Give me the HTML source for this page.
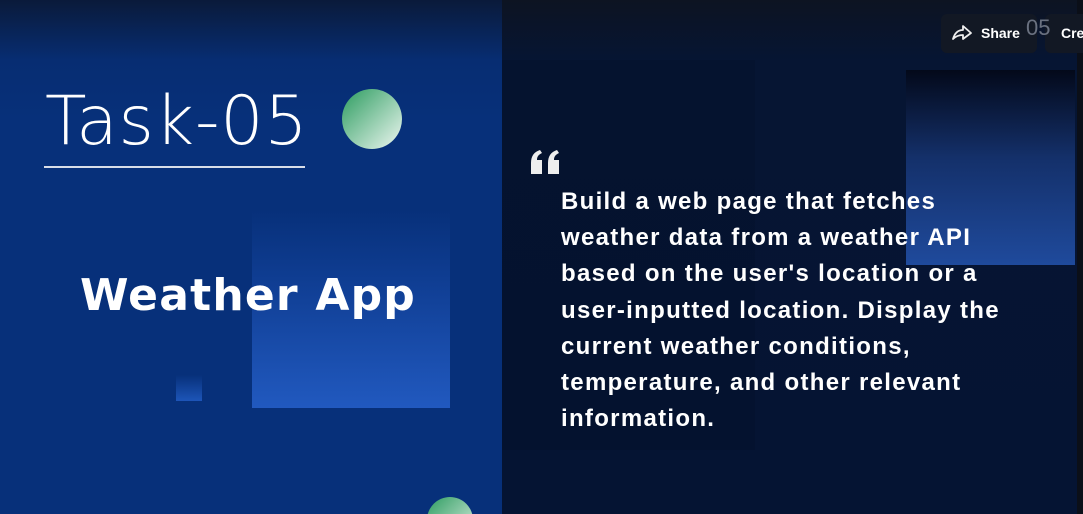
<!DOCTYPE html>
<html><head><style>
*{margin:0;padding:0;box-sizing:border-box}
html,body{width:1083px;height:514px;overflow:hidden}
body{background:#061230;font-family:"Liberation Sans",sans-serif}
#w{position:relative;width:1083px;height:514px;overflow:hidden}
.left{position:absolute;left:0;top:0;width:502px;height:514px;background:linear-gradient(180deg,#0a1a3a 0px,#072d72 60px,#07307a 120px,#07307a 514px)}
.right{position:absolute;left:502px;top:0;width:581px;height:514px;background:linear-gradient(180deg,#0d1422 0px,#061533 60px,#051433 100%)}
.strip{position:absolute;left:1077px;top:0;width:6px;height:514px;background:#0b0f18}
.inner{position:absolute;left:502px;top:60px;width:253px;height:390px;background:rgba(0,0,0,0.08)}
.a{position:absolute;color:#fff;white-space:nowrap}
</style></head><body><div id="w">
<div class="left"></div>
<div class="right"></div>
<div class="inner"></div>
<div class="strip"></div>
<div style="position:absolute;left:252px;top:210px;width:198px;height:198px;background:linear-gradient(180deg,#07307a 0%,#0f3d92 35%,#2159bf 100%)"></div>
<div style="position:absolute;left:176px;top:375px;width:26px;height:26px;background:linear-gradient(180deg,#07307a,#1d55b8)"></div>
<div style="position:absolute;left:906px;top:70px;width:169px;height:195px;background:linear-gradient(180deg,#03091a 0%,#14306a 45%,#1f4a9c 100%)"></div>
<div style="position:absolute;left:342px;top:89px;width:60px;height:60px;border-radius:50%;background:linear-gradient(135deg,#3fa56e 10%,#dbeee3 90%)"></div>
<div style="position:absolute;left:427px;top:497px;width:46px;height:17px;overflow:hidden"><div style="width:46px;height:46px;border-radius:50%;background:linear-gradient(135deg,#3fa56e 10%,#cfe8d8 90%)"></div></div>
<div class="a" style="left:45px;top:82px;font-size:68px;letter-spacing:0.8px;font-family:'DejaVu Sans','Liberation Sans',sans-serif;font-weight:200">Task-05</div>
<div style="position:absolute;left:44px;top:166px;width:261px;height:2px;background:#d8dde8"></div>
<div class="a" style="left:80px;top:270px;font-size:44px;font-weight:bold;letter-spacing:1.2px;font-family:'DejaVu Sans',sans-serif">Weather App</div>
<svg style="position:absolute;left:530px;top:150px" width="32" height="24" viewBox="0 0 32 24"><path d="M1 24 V13 C1 6 4 2 10 0 L12 3 C8 5 7 7 7 10 H12 V24 Z M18 24 V13 C18 6 21 2 27 0 L29 3 C25 5 24 7 24 10 H29 V24 Z" fill="#eee"/></svg>
<div class="a" style="left:561px;top:184px;width:500px;font-size:24px;font-weight:bold;line-height:36.2px;letter-spacing:1.3px">Build a web page that fetches<br>weather data from a weather API<br>based on the user's location or a<br>user-inputted location. Display the<br>current weather conditions,<br>temperature, and other relevant<br>information.</div>
<div style="position:absolute;left:941px;top:14px;width:96px;height:39px;border-radius:6px;background:#121824"></div>
<div style="position:absolute;left:1045px;top:14px;width:38px;height:39px;border-radius:6px 0 0 6px;background:#121824"></div>
<svg style="position:absolute;left:951px;top:24px" width="22" height="18" viewBox="0 0 22 18"><path d="M2 15 C4 8 8 6 12 6 V2 L20 9 L12 15 V11 C8 11 5 12 2 15 Z" fill="none" stroke="#eee" stroke-width="1.8" stroke-linejoin="round"/></svg>
<div class="a" style="left:981px;top:25px;font-size:14px;font-weight:bold;font-family:'Liberation Sans',sans-serif">Share</div>
<div class="a" style="left:1026px;top:15px;font-size:22px;color:#6a7180">05</div>
<div class="a" style="left:1061px;top:25px;font-size:14px;font-weight:bold;font-family:'Liberation Sans',sans-serif">Cre</div>
</div></body></html>
